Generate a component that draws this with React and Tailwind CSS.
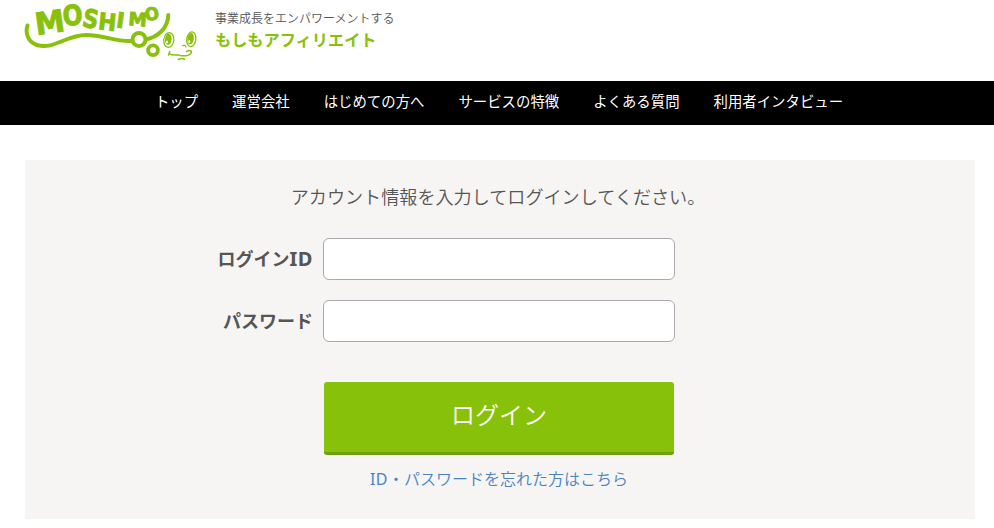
const navItems = [
    'トップ',
    '運営会社',
    'はじめての方へ',
    'サービスの特徴',
    'よくある質問',
    '利用者インタビュー',
];

const Logo = () => (
    <svg
        width="176"
        height="66"
        viewBox="22 0 176 66"
        className="block shrink-0 overflow-visible"
        fill="none"
        stroke="#88c10a"
        strokeLinecap="round"
        role="img"
        aria-label="MOSHIMO"
    >
        <path d="M27.500 25.500C25 33 28 42 37 45C54 50 66 35 86 35C104 35 115 42 132 41" strokeWidth="4" />
        <path d="M146 39.500C158 37 168 28 168.300 15" strokeWidth="4" />
        <circle cx="139" cy="39.500" r="6.500" strokeWidth="4" />
        <circle cx="153" cy="50.200" r="4.900" strokeWidth="3.800" />
        {/* Wordmark */}
        <g
            fill="#88c10a"
            strokeWidth="0.900"
            textAnchor="middle"
            fontFamily="DejaVu Sans, sans-serif"
            fontWeight="700"
        >
            <text transform="translate(51.200 33) rotate(-8) scale(.98 1)" fontSize="30.500">M</text>
            <text transform="translate(73.300 25) rotate(-4) scale(.84 1)" fontSize="28">O</text>
            <text transform="translate(89 27.500) rotate(12) scale(.85 1)" fontSize="25.500">S</text>
            <text transform="translate(106.500 30.300) rotate(6) scale(.92 1)" fontSize="23.500">H</text>
            <text transform="translate(119.500 27.800) rotate(8)" fontSize="21.500">I</text>
            <text transform="translate(137.300 26) rotate(4)" fontSize="18.500">M</text>
            <text transform="translate(153 20) rotate(-10) scale(.95 1)" fontSize="17.500">O</text>
        </g>
        {/* Face */}
        <ellipse cx="168.800" cy="40" rx="5" ry="7.400" strokeWidth="1.300" transform="rotate(6 168.800 40)" />
        <ellipse cx="168.300" cy="39.300" rx="3.300" ry="5.700" fill="#88c10a" stroke="none" transform="rotate(6 168.300 39.300)" />
        <ellipse cx="167" cy="42" rx="1" ry="1.500" fill="white" stroke="none" />
        <ellipse cx="191.300" cy="39.300" rx="4.500" ry="7.400" strokeWidth="1.300" transform="rotate(8 191.300 39.300)" />
        <ellipse cx="190.700" cy="38.700" rx="3.100" ry="5.700" fill="#88c10a" stroke="none" transform="rotate(8 190.700 38.700)" />
        <ellipse cx="189.300" cy="41.500" rx="1" ry="1.500" fill="white" stroke="none" />
        <path d="M182.500 45.800Q185.500 44 185.800 47" strokeWidth="1.200" />
        <path d="M169.800 51.500L168.500 55M169 53.800C172 55.500 176 55 179 55C181 56.500 183 55.500 185 55.700C189 56 192.500 53 191 51Q189 50 186.500 51.500" strokeWidth="1.500" />
        <path d="M178.500 59.500Q181.500 57.500 184.500 59.300" strokeWidth="1.600" />
    </svg>
);

const Field = ({ id, type, children }) => (
    <div className="flex items-center gap-2.5">
        <label htmlFor={id} className="w-72 pb-0.5 text-right text-lg font-bold text-[#555]">
            {children}
        </label>
        <input id={id} type={type} className="h-[42px] w-[352px] rounded-md border border-[#aaa9ad] bg-white px-3 outline-none" />
    </div>
);

export default function App() {
    return (
        <div className="h-[528px] overflow-hidden bg-white font-['Noto_Sans_CJK_JP',sans-serif] text-[#555]">
            <header className="flex h-[81px] items-start pl-[22px]">
                <Logo />
                <div className="ml-[17px] pt-[9px]">
                    <p className="text-xs leading-[18px] font-[350]">事業成長をエンパワーメントする</p>
                    <h1 className="text-[16.200px] leading-[25px] font-bold text-[#88c10a]">もしもアフィリエイト</h1>
                </div>
            </header>

            <nav className="h-11 bg-black">
                <ul className="flex h-full items-center justify-center gap-[34px] pb-1 pl-1 text-[14.400px] text-white">
                    {navItems.map((item) => (
                        <li key={item}>
                            <a href="#">{item}</a>
                        </li>
                    ))}
                </ul>
            </nav>

            <main className="mt-[35px] ml-[25px] h-[359px] w-[950px] bg-[#f6f5f4]">
                <p className="pt-[23px] pr-1 text-center text-[18.100px] leading-[27px] font-[350]">
                    アカウント情報を入力してログインしてください。
                </p>
                <form className="mt-7" onSubmit={(e) => e.preventDefault()}>
                    <div className="flex flex-col gap-5">
                        <Field id="login-id" type="text">
                            ログイン<span className="font-['Noto_Sans'] text-[20px] leading-none tracking-[0.500px]">ID</span>
                        </Field>
                        <Field id="password" type="password">パスワード</Field>
                    </div>
                    <button className="mt-10 ml-[299px] block h-[73px] w-[350px] rounded-[3px] border-b-3 border-[#6f9f12] bg-[#88c10a] pb-1.5 text-2xl font-[350] text-white">
                        ログイン
                    </button>
                </form>
                <p className="mt-[11px] pr-0.5 text-center text-base leading-6 font-[350] text-[#4a82c3]">
                    <a href="#">
                        <span className="font-['Noto_Sans'] font-normal tracking-[0.500px]">ID</span>・パスワードを忘れた方はこちら
                    </a>
                </p>
            </main>
        </div>
    );
}
